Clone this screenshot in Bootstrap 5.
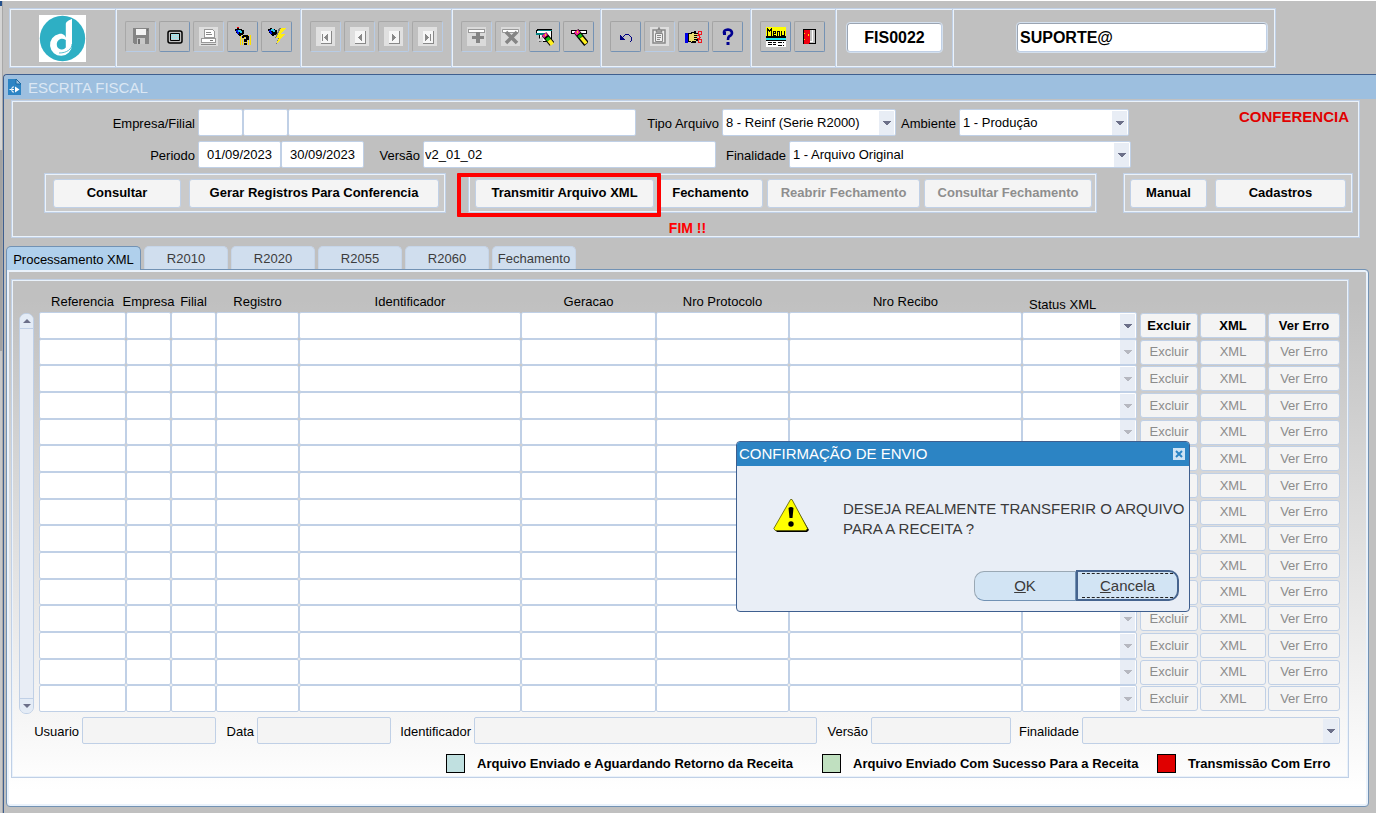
<!DOCTYPE html>
<html lang="pt-BR">
<head>
<meta charset="utf-8">
<meta name="viewport" content="width=device-width, initial-scale=1">
<title>Escrita Fiscal</title>
<link href="https://cdn.jsdelivr.net/npm/bootstrap@5.3.0/dist/css/bootstrap.min.css" rel="stylesheet">
<style>
  :root { --edge:#c0d0e6; --lite:#eaf2fb; --face:#c0c0c0; --navy:#3f5f8f; }
  body { background:var(--face); color:#000; font-family:"Liberation Sans",Arial,sans-serif; font-size:13px; line-height:16px; border-top:1px solid #fff; }
  input, select, button { font:inherit; color:#000; }
  .app { min-height:calc(100vh - 1px); }
  .side-strip { width:3px; background:linear-gradient(#24508c 5px,#d4d4d4 5px 149px,#a2a2a2 149px 350px,#c8c8c8 350px); border-right:1px solid #a8a8a8; }
  .etched { border:1px solid var(--edge); box-shadow:inset 0 0 0 1px var(--lite); }

  .toolbar { width:1267px; max-width:100%; height:60px; margin:7px 0 0 6px; }
  .tool-sec { padding:12px 0 0 8px; border-right:1px solid var(--lite); box-shadow:-1px 0 0 var(--edge) inset; gap:3px; }
  .tool-sec:last-child { border-right:0; box-shadow:none; }
  .s-logo { width:107px; padding:6px 0 0 29px; } .s-a { width:185px; } .s-b { width:151px; } .s-c { width:149px; }
  .s-d { width:150px; } .s-e { width:85px; } .s-f { width:117px; padding:14px 0 0 10px; } .s-g { flex:1; padding:14px 8px 0 63px; }
  .tool { width:31px; height:31px; padding:0; background:var(--face); border:1px solid; border-color:#a4a4a4 #7492b4 #7492b4 #a4a4a4; border-radius:2px; display:flex; align-items:center; justify-content:center; }
  .tool:disabled { border-color:#a8a8a8 #b8cce6 #b8cce6 #a8a8a8; }
  .code-box { height:29px; width:95px; border:1px solid; border-color:#9aa4b2 var(--edge) var(--edge) #9aa4b2; outline:1px solid #d4e0ee; border-radius:3px; font-size:16px; font-weight:700; background:#fff; padding:0 2px; }

  .mdi { margin-top:6px; border:solid var(--navy); border-width:1px 0 0 1px; border-top-left-radius:4px; position:relative; }
  .mdi-title { height:24px; background:#9dbfdf; color:#dbe7f4; font-size:15px; line-height:25px; padding-left:4px; gap:7px; border-top-left-radius:4px; }
  .head-panel { margin:1px 16px 0 7px; height:138px; padding:8px 6px 0 0; }
  .fld { height:27px; border:1px solid var(--edge); border-radius:2px; background-color:#fff; padding:0 1px; min-width:0; }
  .combo { appearance:none; padding:0 20px 0 3px; background-repeat:no-repeat; background-position:right 1px center;
    background-image:url("data:image/svg+xml,%3Csvg xmlns='http://www.w3.org/2000/svg' width='15' height='24'%3E%3Cpath d='M0 0h15v24H0z' fill='%23e8edf5'/%3E%3Cpath d='M4 10h8v1h-1v1h-1v1H9v1H7v-1H6v-1H5v-1H4z' fill='%236c7089'/%3E%3C/svg%3E"); }
  .combo:disabled { opacity:1; }
  .off { background-color:#f4f4f4; }
  .lbl { padding-right:3px; text-align:right; white-space:nowrap; padding-top:2px; }
  .row-b { margin-top:5px; }
  .l-first { width:186px; } .l-tipo { width:86px; } .l-amb { width:63px; } .l-ver { width:59px; } .l-fin { width:73px; }
  .w-cod { width:45px; } .w-nome { width:348px; } .w-tipo { width:174px; } .w-amb { width:170px; } .w-date { width:83px; text-align:center; } .w-ver { width:293px; } .w-fin { width:342px; }
  .flag { color:#e00000; font-size:15px; font-weight:700; }
  .btn-row { margin:5px 0 0 32px; }
  .grp { height:40px; background:#cacaca; padding:0 6px; align-items:center; display:flex; }
  .g-left { padding-left:8px; }
  .g-mid { padding-right:4px; margin-left:22px; }
  .push { height:29px; background:#f4f4f4; border:1px solid var(--edge); border-radius:3px; font-weight:700; padding:0; white-space:nowrap; }
  .push:disabled { color:#8e8e8e; }
  .b1 { width:128px; } .b2 { width:250px; } .b3 { width:179px; } .b4 { width:105px; } .b5 { width:153px; } .b6 { width:168px; } .b7 { width:77px; } .b8 { width:131px; }
  .marked { position:relative; }
  .marked::after { content:""; position:absolute; inset:-6px -7px -9px -18px; border:4px solid #f00; border-radius:1px; }
  .fim { color:#f00; font-size:14px; font-weight:700; margin-top:7px; padding-left:10px; text-align:center; }

  .tabs { margin:8px 0 0 2px; gap:3px; }
  .tab { width:84px; height:23px; border:1px solid #c6d5e8; border-bottom:0; border-radius:5px 5px 0 0; background:#d0deee; color:#3c3c3c; padding:2px 0 0; }
  .tab.on { width:135px; height:24px; margin-bottom:-1px; background:#b0d0ec; border-color:#7292b4; color:#000; position:relative; }
  .sheet { margin:0 7px 0 2px; height:538px; border:1px solid #7292b4; border-radius:0 4px 4px 4px; box-shadow:inset 0 0 0 2px var(--lite); background:linear-gradient(#c0c0c0 30px,#fff 520px); padding:9px 19px 0 4px; }
  .grid-panel { height:499px; padding:9px 8px 0 7px; }
  .vbar { width:15px; height:401px; margin:24px 5px 0 0; border:1px solid var(--edge); border-radius:7px; background:#e8edf5; overflow:hidden; flex:none; }
  .vbar button { height:15px; border:0; background:#e4ecf6; padding:0; line-height:0; }
  .vbar button:first-child { border-bottom:1px solid var(--edge); } .vbar button:last-child { border-top:1px solid var(--edge); }
  .regs { table-layout:fixed; border-collapse:collapse; flex:1; width:100px; }
  .regs th { height:23px; padding:6px 0 0; font-weight:400; text-align:center; white-space:nowrap; line-height:14px; vertical-align:top; }
  .regs th span { margin:0 -6px; }
  .regs th.st { text-align:left; padding:9px 0 0 7px; }
  .regs td { padding:0; height:27px; line-height:0; }
  .regs .fld { width:100%; display:block; }
  .regs tr:nth-child(3n+2) td, .regs tr:nth-child(3n+2) .fld { height:26px; }
  .regs .push { width:100%; height:25px; display:block; line-height:16px; }
  .regs td.p3 { padding-left:3px; } .regs td.p2 { padding-left:2px; }
  .regs .push:disabled { font-weight:400; color:#8c8c8c; }
  .regs .combo:disabled { background-image:url("data:image/svg+xml,%3Csvg xmlns='http://www.w3.org/2000/svg' width='15' height='24'%3E%3Cpath d='M0 0h15v24H0z' fill='%23e8edf5'/%3E%3Cpath d='M4 10h8v1h-1v1h-1v1H9v1H7v-1H6v-1H5v-1H4z' fill='%23b6b8c0'/%3E%3C/svg%3E"); }
  .c-ref { width:87px; } .c-45 { width:45px; } .c-reg { width:83px; } .c-ger { width:135px; } .c-pro { width:133px; } .c-rec { width:233px; } .c-st { width:115px; } .c-x1 { width:61px; } .c-x2 { width:68px; } .c-x3 { width:74px; }
  .foot { margin-top:3px; padding-left:15px; }
  .w-134 { width:134px; } .w-140 { width:140px; } .w-258 { width:258px; }
  .f-dat { width:41px; } .f-usu { width:48px; } .f-ide { width:83px; } .f-ver { width:54px; } .f-fin { width:71px; }
  .legend-row { margin-top:10px; font-weight:700; }
  .leg { display:flex; align-items:center; }
  .leg-a { width:376px; } .leg-b { width:335px; } .leg-c { width:183px; }
  .swatch { width:19px; height:19px; border:1px solid #000; margin-right:12px; }
  .sw-a { background:#c0e0e0; } .sw-b { background:#c0e0c0; } .sw-c { background:#e00000; }

  .dlg { position:absolute; left:732px; top:366px; width:454px; height:171px; background:#e9eef6; border:1px solid var(--navy); border-radius:4px; color:#3a3a3a; font-size:15px; }
  .dlg-title { height:24px; background:#2c84c4; color:#fff; line-height:24px; padding:0 4px 0 2px; border-radius:3px 3px 0 0; }
  .dlg-x { width:12px; height:12px; border:0; padding:0; background:#cfe3f4; line-height:0; }
  .dlg-msg { padding:33px 0 0 36px; line-height:20px; gap:33px; }
  .dlg-acts { margin-top:31px; padding-right:10px; }
  .dlg-btn { height:30px; width:102px; background:#d2e4f4; color:#3a3a3a; border:1px solid #7292b4; border-color:#9aa8b4 #7292b4 #7292b4 #9aa8b4; padding:0; }
  .dlg-ok { border-radius:10px 0 0 10px; }
  .dlg-cc { width:103px; height:31px; border:2px solid #46648e; border-radius:0 10px 10px 0; padding:1px 4px; }
  .dlg-cc span { display:block; border:dashed #222; border-width:1px 0; line-height:23px; height:25px; }
</style>
</head>
<body>
<div class="app d-flex">
<div class="side-strip"></div>
<div class="flex-grow-1 d-flex flex-column">
  <header class="toolbar etched d-flex">
    <div class="tool-sec s-logo">
      <svg width="47" height="47" viewBox="0 0 47 47"><path fill="#fff" d="M0 0h47v47H0z"/><circle cx="23.500" cy="23.500" r="22.700" fill="#2eafc4"/><path d="M33 4v26a11 11 0 1 1-13-11c4-1 7 2 7 5l-.2 1c-5-3-9 .500-9 4.500a5 5 0 0 0 9 3V9c0-2 3-4 6-5z" fill="#fff"/><path d="M20 38c8 0 13-4 13-9" fill="none" stroke="#2eafc4" stroke-width=".8"/></svg>
    </div>
    <div class="tool-sec s-a d-flex">
      <button class="tool" disabled aria-label="Salvar"><svg width="16" height="17" shape-rendering="crispEdges"><path fill="#858585" d="M0 0h16v16H1l-1-1z"/><path fill="#f4f4f4" d="M3 1h10v6H3z"/><path fill="#c8c8c8" d="M4 10h8v6H4z"/><path fill="#707070" d="M5 11h2v5H5zM14 1h1v2h-1z"/></svg></button>
      <button class="tool" aria-label="Tela"><svg width="16" height="14"><rect x="1" y="1" width="14" height="12" rx="2" fill="#c0c0c0" stroke="#000" stroke-width="1.500"/><path fill="#9ee4ec" stroke="#000" d="M3.500 3.500h9v7h-9z"/><path stroke="#e8b8b8" stroke-dasharray="1 1" d="M4 5.500h8M5 7.500h8M4 9.500h8"/></svg></button>
      <button class="tool" disabled aria-label="Imprimir"><svg width="19" height="19" shape-rendering="crispEdges"><path fill="#dedede" d="M0 0h19v19H0z"/><path fill="#fff" stroke="#999" d="M5.500 2.500h8l2 2v6h-10zM2.500 11.500h14v4h-14z"/><path stroke="#888" d="M7 5.500h5M7 7.500h6M2 17.500h15"/><path fill="#777" d="M11 13h3v1h-3z"/></svg></button>
      <button class="tool" aria-label="Entrar consulta"><svg width="18" height="19" shape-rendering="crispEdges"><path stroke="#ffe000" stroke-width="10" stroke-dasharray="1 1" d="M6 13h12"/><path fill="#000" d="M3 1h2v1h3v1h2v4H9v1H7v1H5V8H4V6H2V4H1V2h2z"/><path fill="#2cc8e8" d="M4 3h3v1h1v2H6V5H4z"/><path fill="#0010e0" d="M2 3h2v2h1v2H3V5H2z"/><path fill="#f00" d="M3 0h2v1H3z"/><path fill="#000" d="M9 8h5v1h1v4h-2v2h-3v-3h2v-2h-2v1H8V9h1zM10 16h3v2h-3z"/></svg></button>
      <button class="tool" aria-label="Executar consulta"><svg width="19" height="19" shape-rendering="crispEdges"><path fill="#000" d="M3 1h2v1h3v1h2v4H9v1H7v1H5V8H4V6H2V4H1V2h2z"/><path fill="#2cc8e8" d="M4 2h3v1h1v2H6V4H4z"/><path fill="#0010e0" d="M2 3h2v2h1v2H3V5H2z"/><path fill="#777" d="M12 1h6l-4 6h3l-8 11 2-7H8z"/><path fill="#ffee10" d="M14 1h5l-5 6h4L9 18l3-7H9z"/></svg></button>
    </div>
    <div class="tool-sec s-b d-flex">
      <button class="tool" disabled aria-label="Primeiro"><svg width="19" height="19" shape-rendering="crispEdges"><path fill="#e0e0e0" d="M0 0h19v19H0z"/><path fill="#f6f6f6" d="M5 4h10v12H5z"/><path fill="#888" d="M15 4h1v13H5v-1h10zM6 7h1v7H6zM12 7v7h-1v-1h-1v-1H9v-1H8v-1h1V9h1V8h1V7z"/></svg></button>
      <button class="tool" disabled aria-label="Anterior"><svg width="19" height="19" shape-rendering="crispEdges"><path fill="#e0e0e0" d="M0 0h19v19H0z"/><path fill="#f6f6f6" d="M5 4h10v12H5z"/><path fill="#888" d="M15 4h1v13H5v-1h10zM12 7v7h-1v-1h-1v-1H9v-1H8v-1h1V9h1V8h1V7z"/></svg></button>
      <button class="tool" disabled aria-label="Seguinte"><svg width="19" height="19" shape-rendering="crispEdges"><path fill="#e0e0e0" d="M0 0h19v19H0z"/><path fill="#f6f6f6" d="M5 4h10v12H5z"/><path fill="#888" d="M15 4h1v13H5v-1h10zM8 7v7h1v-1h1v-1h1v-1h1v-1h-1V9h-1V8H9V7z"/></svg></button>
      <button class="tool" disabled aria-label="Último"><svg width="19" height="19" shape-rendering="crispEdges"><path fill="#e0e0e0" d="M0 0h19v19H0z"/><path fill="#f6f6f6" d="M5 4h10v12H5z"/><path fill="#888" d="M15 4h1v13H5v-1h10zM7 7v7h1v-1h1v-1h1v-1h1v-1h-1V9H9V8H8V7zM12 7h1v7h-1z"/></svg></button>
    </div>
    <div class="tool-sec s-c d-flex">
      <button class="tool" disabled aria-label="Inserir"><svg width="19" height="19" shape-rendering="crispEdges"><path fill="#dadada" d="M0 0h19v19H0z"/><path fill="#fff" stroke="#999" d="M1.500 2.500h16v3h-16z"/><path fill="#858585" d="M9 5h4v4h4v3h-4v4H9v-4H5V9h4z"/></svg></button>
      <button class="tool" disabled aria-label="Excluir registro"><svg width="19" height="19"><path fill="#dadada" d="M0 0h19v19H0z"/><path fill="#fff" stroke="#999" d="M1.500 2.500h16v3h-16z"/><path stroke="#858585" stroke-width="3.500" d="M5 5l11 11M16 5L5 16"/></svg></button>
      <button class="tool" aria-label="Limpar bloco"><svg width="18" height="18"><path fill="#fff" stroke="#000" d="M1.500 1.500h14v12h-12v-8h-3v-3h1z" shape-rendering="crispEdges"/><path fill="#008080" d="M2 2h14v1H2zM0 5h11v2H0z"/><path fill="#d0d0d0" d="M1 13l6-6v7z"/><path stroke="#000" stroke-width="6" d="M8 6l8 10"/><path stroke="#f0209c" stroke-width="5" d="M8 6l2 2.500"/><path stroke="#10c010" stroke-width="4" d="M11 9.700l2 2.500"/><path stroke="#fff020" stroke-width="4" d="M13 12.200l3.500 4.300"/><path fill="#ffd800" d="M9 6h1v2H9z"/></svg></button>
      <button class="tool" aria-label="Limpar registro"><svg width="18" height="18"><path fill="#fff" stroke="#000" d="M1.500 2.500h15v3h-15z" shape-rendering="crispEdges"/><path stroke="#000" stroke-width="6" d="M6 3l10.500 13"/><path stroke="#f0209c" stroke-width="5" d="M6 3l2.500 3"/><path stroke="#10c010" stroke-width="4" d="M9 6.700l2 2.500"/><path stroke="#fff020" stroke-width="3.500" d="M11.200 9.500l5 6"/><path fill="#ffd800" d="M7 3h1v2H7z"/></svg></button>
    </div>
    <div class="tool-sec s-d d-flex">
      <button class="tool" aria-label="Desfazer"><svg width="16" height="12" shape-rendering="crispEdges"><path fill="#000080" d="M2 4v5h5V8H6V7H5V6h1V5h1V4h4v1h1v1h1v4h-1v1h1v-1h1V6h-1V5h-1V4h-1V3H7v1H6v1H5v1H4V5H3V4z"/></svg></button>
      <button class="tool" disabled aria-label="Lista"><svg width="19" height="19"><path fill="#dedede" d="M0 0h19v19H0z"/><path fill="#eee" stroke="#888" stroke-width="1.500" d="M3 3h12v13H3zM6.500 5V3H8l1-2 1 2h1.500v2z"/><path stroke="#888" d="M5.500 6.500h7v8h-7zM7 8.500h4M7 10.500h4M7 12.500h3" fill="none"/></svg></button>
      <button class="tool" aria-label="Editar"><svg width="18" height="14" shape-rendering="crispEdges"><path fill="#000" d="M3 3h3V2h3V1h2v2h3v3h-2v2h1v3h-2v2H6v-1H3z"/><path fill="#0000e8" d="M0 3h3v10H0z"/><path fill="#ece070" d="M4 4h3V3h2v1h4v1H9v1h3v1H9v1h3v1H9v1h2v1H7v1H6v-1H4z"/><path fill="none" stroke="#f01820" d="M13.500 1.500h3v3h-3zM13.500 9.500h3v3h-3zM12 5.500h2v3h-2M14 7h2"/></svg></button>
      <button class="tool" aria-label="Ajuda"><svg width="12" height="18"><path fill="none" stroke="#000090" stroke-width="2.600" d="M2 5.500V4q0-2 4-2.500 4 .5 4 3.500 0 2-3 3.500Q6 9.500 6 12"/><path fill="#000090" d="M4.500 14h3v3h-3z"/><path fill="#000090" d="M1 4h3v3H1z"/></svg></button>
    </div>
    <div class="tool-sec s-e d-flex">
      <button class="tool" aria-label="Menu"><svg width="20" height="20" shape-rendering="crispEdges"><path fill="#ff0" d="M0 0h20v9H0z"/><path fill="#000" d="M1 1h1v1h1v1h1V2h1V1h1v8H5V4H4v1H3V4H2v5H1zM7 4h3v3H8v1h2v1H7zM8 5v1h1V5zM11 4h3v5h-1V5h-1v4h-1zM15 4h1v4h2V4h1v5h-4z"/><path fill="#000" d="M0 9h20v2H0zM0 13h20v1H0z"/><path fill="#20e8f0" d="M0 11h20v2H0z"/><path fill="#fff" d="M0 14h20v6H0z"/><path stroke="#000" stroke-dasharray="4 1" d="M2 15.500h8M2 17.500h8M12 15.500h6M12 18.500h6"/></svg></button>
      <button class="tool" aria-label="Sair"><svg width="13" height="16" shape-rendering="crispEdges"><path fill="#c0c0c0" stroke="#000" d="M.5.500h12v14H.5z"/><path fill="#fff" d="M9 1h1v12H7v-1h2z"/><path fill="#f00010" d="M1 1h6v12l-2 2H1z"/><path fill="#ffe000" d="M5 5h1v2H5zM1 4h1v1H1zM1 10h1v1H1z"/></svg></button>
    </div>
    <div class="tool-sec s-f"><input class="code-box text-center" aria-label="Programa" value="FIS0022"></div>
    <div class="tool-sec s-g"><input class="code-box w-100" aria-label="Usuário" value="SUPORTE@"></div>
  </header>

  <main class="mdi flex-grow-1">
    <div class="mdi-title d-flex">
      <svg width="13" height="16" class="mt-1"><path d="M0 0h8l5 5v11H0z" fill="#2c84c4"/><path d="M8 0v5h5z" fill="#9dbfdf" stroke="#1868a0"/><path d="M1.500 10.500h2M6 8H4.500q-2 2.500 0 5H6M4 10.500h2" stroke="#fff" fill="none"/><path d="M7 7.500l4.500 3L7 13.500z" fill="#fff"/></svg>
      <span>ESCRITA FISCAL</span>
    </div>

    <section class="head-panel etched">
      <div class="d-flex">
        <label class="lbl l-first align-self-center" for="emp">Empresa/Filial</label>
        <input class="fld w-cod" id="emp"><input class="fld w-cod" aria-label="Filial"><input class="fld w-nome" aria-label="Nome da empresa">
        <label class="lbl l-tipo align-self-center" for="tipo">Tipo Arquivo</label>
        <select class="fld combo w-tipo" id="tipo"><option>8 - Reinf (Serie R2000)</option></select>
        <label class="lbl l-amb align-self-center" for="amb">Ambiente</label>
        <select class="fld combo w-amb" id="amb"><option>1 - Produção</option></select>
        <span class="flag ms-auto pe-1 align-self-start">CONFERENCIA</span>
      </div>
      <div class="d-flex row-b">
        <label class="lbl l-first align-self-center" for="ini">Periodo</label>
        <input class="fld w-date" id="ini" value="01/09/2023"><input class="fld w-date" aria-label="Fim do periodo" value="30/09/2023">
        <label class="lbl l-ver align-self-center" for="ver">Versão</label>
        <input class="fld w-ver" id="ver" value="v2_01_02">
        <label class="lbl l-fin align-self-center" for="fin">Finalidade</label>
        <select class="fld combo w-fin" id="fin"><option>1 - Arquivo Original</option></select>
      </div>
      <div class="btn-row d-flex">
        <div class="grp g-left etched gap-2"><button class="push b1">Consultar</button><button class="push b2">Gerar Registros Para Conferencia</button></div>
        <div class="grp g-mid etched gap-1"><span class="marked"><button class="push b3">Transmitir Arquivo XML</button></span><button class="push b4">Fechamento</button><button class="push b5" disabled>Reabrir Fechamento</button><button class="push b6" disabled>Consultar Fechamento</button></div>
        <div class="grp etched gap-2 ms-auto"><button class="push b7">Manual</button><button class="push b8">Cadastros</button></div>
      </div>
      <div class="fim">FIM !!</div>
    </section>

    <nav class="tabs d-flex align-items-end" role="tablist">
      <button class="tab on" role="tab" aria-selected="true">Processamento XML</button>
      <button class="tab" role="tab">R2010</button><button class="tab" role="tab">R2020</button><button class="tab" role="tab">R2055</button><button class="tab" role="tab">R2060</button><button class="tab" role="tab">Fechamento</button>
    </nav>

    <section class="sheet">
      <div class="grid-panel etched">
        <div class="d-flex align-items-start">
          <div class="vbar d-flex flex-column justify-content-between">
            <button aria-label="Rolar para cima"><svg width="8" height="4"><path d="M0 4l4-4 4 4z" fill="#6c7089"/></svg></button>
            <button aria-label="Rolar para baixo"><svg width="8" height="4"><path d="M0 0l4 4 4-4z" fill="#6c7089"/></svg></button>
          </div>
          <table class="regs">
            <colgroup><col class="c-ref"><col class="c-45"><col class="c-45"><col class="c-reg"><col><col class="c-ger"><col class="c-pro"><col class="c-rec"><col class="c-st"><col class="c-x1"><col class="c-x2"><col class="c-x3"></colgroup>
            <thead><tr><th>Referencia</th><th><span>Empresa</span></th><th>Filial</th><th>Registro</th><th>Identificador</th><th>Geracao</th><th>Nro Protocolo</th><th>Nro Recibo</th><th class="st">Status XML</th><th></th><th></th><th></th></tr></thead>
            <tbody id="rows"></tbody>
          </table>
        </div>
        <div class="foot d-flex align-items-center">
          <label class="lbl f-usu" for="usu">Usuario</label><input class="fld off w-134" id="usu" readonly>
          <label class="lbl f-dat" for="dat">Data</label><input class="fld off w-134" id="dat" readonly>
          <label class="lbl f-ide" for="ide">Identificador</label><input class="fld off flex-grow-1" id="ide" readonly>
          <label class="lbl f-ver" for="vrs">Versão</label><input class="fld off w-140" id="vrs" readonly>
          <label class="lbl f-fin" for="fnl">Finalidade</label><select class="fld off combo w-258" id="fnl" disabled></select>
        </div>
        <div class="legend-row d-flex justify-content-end">
          <span class="leg leg-a"><i class="swatch sw-a"></i>Arquivo Enviado e Aguardando Retorno da Receita</span>
          <span class="leg leg-b"><i class="swatch sw-b"></i>Arquivo Enviado Com Sucesso Para a Receita</span>
          <span class="leg leg-c"><i class="swatch sw-c"></i>Transmissão Com Erro</span>
        </div>
      </div>
    </section>

    <div class="dlg" role="dialog" aria-labelledby="dlgTitle">
      <div class="dlg-title d-flex align-items-center justify-content-between"><span id="dlgTitle">CONFIRMAÇÃO DE ENVIO</span>
        <button class="dlg-x" aria-label="Fechar"><svg width="12" height="12"><path d="M3 3l6 6M9 3l-6 6" stroke="#2c84c4" stroke-width="2"/></svg></button></div>
      <div class="dlg-msg d-flex">
        <svg width="37" height="33" class="flex-shrink-0"><path d="M19 2L36 31l-2 2H4l-2-2z" fill="#000"/><path d="M17.500.5L.800 29.500l1.500 2H33l1.500-2L19 .5z" fill="#ff0" stroke="#555500" stroke-width=".8"/><path d="M15.500 9q2.500-2 5 0l-1 10h-3z" fill="#000"/><circle cx="18" cy="25" r="2.700" fill="#000"/></svg>
        <div class="text-nowrap">DESEJA REALMENTE TRANSFERIR O ARQUIVO<br>PARA A RECEITA ?</div>
      </div>
      <div class="dlg-acts d-flex justify-content-end align-items-center">
        <button class="dlg-btn dlg-ok"><u>O</u>K</button><button class="dlg-btn dlg-cc"><span><u>C</u>ancela</span></button>
      </div>
    </div>
  </main>
</div>
</div>
<script>
  // Fifteen record lines; only the first one is active.
  const names = ['Referencia','Empresa','Filial','Registro','Identificador','Geracao','Nro Protocolo','Nro Recibo'];
  const body = document.getElementById('rows');
  for (let i = 1; i <= 15; i++) {
    const off = i > 1 ? ' disabled' : '';
    body.insertAdjacentHTML('beforeend', '<tr>' +
      names.map(n => `<td><input class="fld" aria-label="${n} ${i}"></td>`).join('') +
      `<td><select class="fld combo" aria-label="Status XML ${i}"${off}></select></td>` +
      `<td class="p3"><button class="push"${off}>Excluir</button></td><td class="p2"><button class="push"${off}>XML</button></td><td class="p2"><button class="push"${off}>Ver Erro</button></td></tr>`);
  }
</script>
<script src="https://cdn.jsdelivr.net/npm/bootstrap@5.3.0/dist/js/bootstrap.bundle.min.js"></script>
</body>
</html>
